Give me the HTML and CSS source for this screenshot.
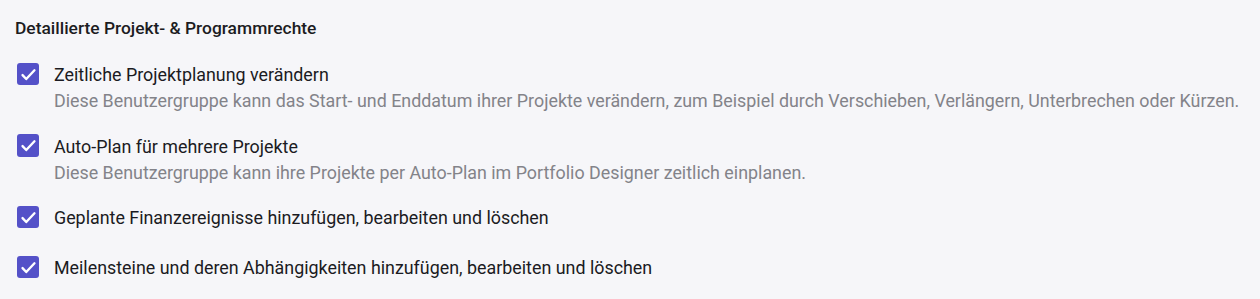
FILE: index.html
```html
<!DOCTYPE html>
<html lang="de">
<head>
<meta charset="utf-8">
<title>Projekt- &amp; Programmrechte</title>
<link rel="stylesheet" href="styles.css">
</head>
<body>
<section class="panel">
  <h2 class="title">Detaillierte Projekt- &amp; Programmrechte</h2>
  <ul class="list">
    <li class="row">
      <span class="box"><svg viewBox="0 0 22 22" width="22.6" height="22.6"><path d="M5.4 11.8 L9 15.6 L17 7.1" fill="none" stroke="#fff" stroke-width="2.3" stroke-linecap="round" stroke-linejoin="round"/></svg></span>
      <div class="text">
        <div class="label">Zeitliche Projektplanung verändern</div>
        <div class="desc">Diese Benutzergruppe kann das Start- und Enddatum ihrer Projekte verändern, zum Beispiel durch Verschieben, Verlängern, Unterbrechen oder Kürzen.</div>
      </div>
    </li>
    <li class="row">
      <span class="box"><svg viewBox="0 0 22 22" width="22.6" height="22.6"><path d="M5.4 11.8 L9 15.6 L17 7.1" fill="none" stroke="#fff" stroke-width="2.3" stroke-linecap="round" stroke-linejoin="round"/></svg></span>
      <div class="text">
        <div class="label">Auto-Plan für mehrere Projekte</div>
        <div class="desc">Diese Benutzergruppe kann ihre Projekte per Auto-Plan im Portfolio Designer zeitlich einplanen.</div>
      </div>
    </li>
    <li class="row">
      <span class="box"><svg viewBox="0 0 22 22" width="22.6" height="22.6"><path d="M5.4 11.8 L9 15.6 L17 7.1" fill="none" stroke="#fff" stroke-width="2.3" stroke-linecap="round" stroke-linejoin="round"/></svg></span>
      <div class="text">
        <div class="label">Geplante Finanzereignisse hinzufügen, bearbeiten und löschen</div>
      </div>
    </li>
    <li class="row">
      <span class="box"><svg viewBox="0 0 22 22" width="22.6" height="22.6"><path d="M5.4 11.8 L9 15.6 L17 7.1" fill="none" stroke="#fff" stroke-width="2.3" stroke-linecap="round" stroke-linejoin="round"/></svg></span>
      <div class="text">
        <div class="label">Meilensteine und deren Abhängigkeiten hinzufügen, bearbeiten und löschen</div>
      </div>
    </li>
  </ul>
</section>
</body>
</html>
```

FILE: styles.css
```css
html, body {
  margin: 0;
  padding: 0;
  background: #f6f6f9;
}
body {
  font-family: Roboto, "Liberation Sans", Arial, sans-serif;
  color: #1e1e24;
}
.panel {
  padding: 15px 15px 0 15px;
}
.title {
  margin: 0;
  font-size: 17.4px;
  line-height: 26px;
  font-weight: 500;
  color: #1c1c22;
}
.list {
  list-style: none;
  margin: 21px 0 0 0;
  padding: 0 0 0 1.7px;
  display: flex;
  flex-direction: column;
  gap: 19.5px;
}
.row {
  display: flex;
  align-items: flex-start;
  min-height: 30.5px;
}
.box {
  flex: none;
  width: 22.6px;
  height: 22.6px;
  margin-top: 0.7px;
  margin-right: 14.7px;
  border-radius: 3px;
  background: #5451c8;
  display: flex;
}
.label {
  font-size: 17.86px;
  line-height: 26px;
  color: #1b1b22;
}
.desc {
  font-size: 17.86px;
  line-height: 26px;
  color: #838389;
}
```
